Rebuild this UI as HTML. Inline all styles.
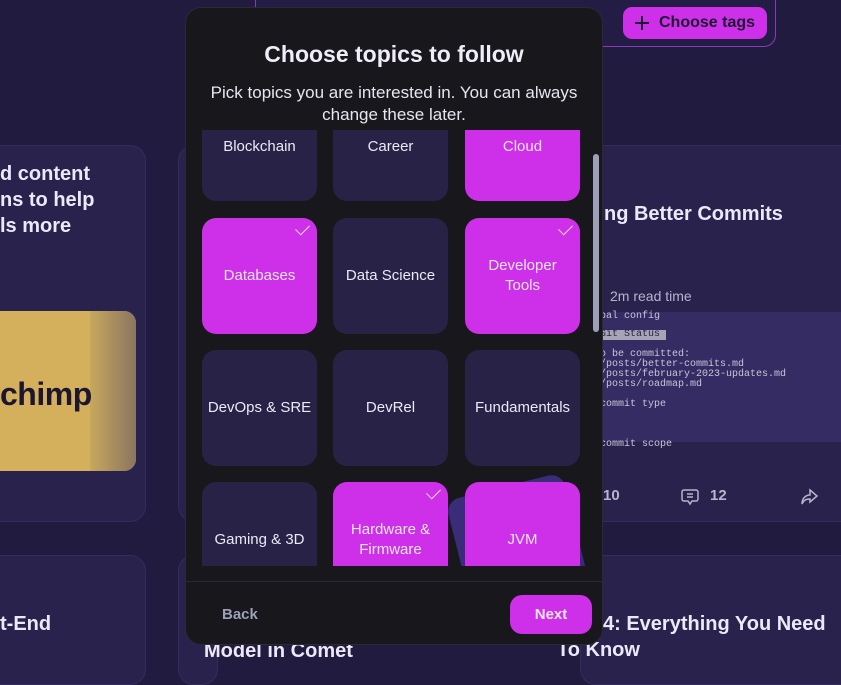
<!DOCTYPE html>
<html><head><meta charset="utf-8"><style>
*{box-sizing:border-box;margin:0;padding:0}
body{width:841px;height:661px;overflow:hidden;background:#221b40;font-family:"Liberation Sans",sans-serif;position:relative;color:#ece8f6}
.card{position:absolute;background:#29224d;border:1px solid #342c5c;border-radius:16px}
.t{position:absolute;font-weight:bold;font-size:20px;line-height:26px;color:#ece8f6;white-space:nowrap}
.modal{position:absolute;left:185px;top:7px;width:418px;height:638px;background:#18181c;border-radius:16px;border:1px solid #2c2838;overflow:hidden}
.tile{position:absolute;width:115px;height:116px;border-radius:14px;background:#282346;display:flex;align-items:center;justify-content:center;text-align:center;font-size:15px;line-height:20px;color:#ece8f6;padding:0 3px}
.on{background:#ce2fe8}
.ck{position:absolute;right:8px;top:6px;width:13px;height:8px;border-left:1.5px solid #e8e0f0;border-bottom:1.5px solid #e8e0f0;transform:rotate(-45deg)}
.mono{font-family:"Liberation Mono",monospace;font-size:10px;line-height:10px;color:#c8c4d8;position:absolute;left:600px;white-space:pre}
</style></head><body>
<div style="position:absolute;left:255px;top:-20px;width:521px;height:67px;border:1px solid #8a3ab8;border-radius:12px;background:#231c44"></div>
<div style="position:absolute;left:623px;top:7px;width:144px;height:32px;background:#ce2fe8;border-radius:9px;color:#1c1630;font-weight:bold;font-size:16px;line-height:32px;padding-left:36px">Choose tags</div>
<div style="position:absolute;left:635px;top:22px;width:14px;height:2px;background:#1c1630"></div>
<div style="position:absolute;left:641px;top:16px;width:2px;height:14px;background:#1c1630"></div>

<div class="card" style="left:-20px;top:145px;width:166px;height:377px"></div>
<div class="t" style="left:0;top:161px">d content<br>ns to help<br>ls more</div>
<div style="position:absolute;left:0;top:311px;width:136px;height:160px;background:#d4b05c;border-radius:0 12px 12px 0"></div>
<div style="position:absolute;left:90px;top:311px;width:46px;height:160px;background:linear-gradient(90deg,#c8a85c,#8a7560);border-radius:0 12px 12px 0"></div>
<div style="position:absolute;left:0;top:376px;font-weight:900;font-size:32px;color:#1c1630;letter-spacing:-0.5px">chimp</div>
<div class="card" style="left:178px;top:145px;width:40px;height:377px"></div>
<div class="card" style="left:-20px;top:555px;width:166px;height:130px"></div>
<div class="t" style="left:0;top:611px">t-End</div>
<div class="card" style="left:178px;top:555px;width:40px;height:130px"></div>
<div class="t" style="left:204px;top:638px">Model in Comet</div>

<div class="card" style="left:580px;top:145px;width:280px;height:377px"></div>
<div class="t" style="left:604px;top:201px">ng Better Commits</div>
<div style="position:absolute;left:610px;top:288px;font-size:14px;color:#b8b4cc">2m read time</div>
<div style="position:absolute;left:600px;top:312px;width:241px;height:130px;background:#362c64;border-radius:12px 0 0 0"></div>
<div class="mono" style="top:312px">bal config</div>
<div style="position:absolute;left:603px;top:330px;width:63px;height:10px;background:#a8a4b8"></div>
<div class="mono" style="top:330px;color:#2a2440">Git Status</div>
<div class="mono" style="top:350px">o be committed:
/posts/better-commits.md
/posts/february-2023-updates.md
/posts/roadmap.md

commit type



commit scope</div>
<div style="position:absolute;left:603px;top:487px;font-size:15px;font-weight:bold;color:#b8b4cc">10</div>
<svg style="position:absolute;left:680px;top:487px" width="20" height="20" viewBox="0 0 20 20" fill="none" stroke="#b8b4cc" stroke-width="1.5"><path d="M4 3h12a2 2 0 0 1 2 2v7a2 2 0 0 1-2 2h-4l-2 3-2-3H4a2 2 0 0 1-2-2V5a2 2 0 0 1 2-2z M7 7h6 M7 10h6"/></svg>
<div style="position:absolute;left:710px;top:487px;font-size:15px;font-weight:bold;color:#b8b4cc">12</div>
<svg style="position:absolute;left:799px;top:487px" width="20" height="20" viewBox="0 0 20 20" fill="none" stroke="#b8b4cc" stroke-width="1.5"><path d="M11 3l7 6-7 6v-3c-4 0-6 1-8 5 0-5 3-9 8-9z"/></svg>
<div class="card" style="left:580px;top:555px;width:280px;height:130px"></div>
<div class="t" style="left:603px;top:611px">4: Everything You Need</div>
<div class="t" style="left:557px;top:637px">To Know</div>

<div class="modal">
<div style="position:absolute;left:0;width:100%;top:33px;text-align:center;font-weight:bold;font-size:23px;color:#f0ecf8">Choose topics to follow</div>
<div style="position:absolute;left:14px;right:14px;top:74px;text-align:center;font-size:17px;line-height:22px;color:#e8e4f0">Pick topics you are interested in. You can always change these later.</div>
<div style="position:absolute;left:0;top:122px;width:418px;height:436px;overflow:hidden">
<div style="position:absolute;left:0;top:-45px;width:418px;height:600px">
<div class="tile" style="left:16px;top:0;align-items:flex-start;padding-top:52px">Blockchain</div>
<div class="tile" style="left:147px;top:0;align-items:flex-start;padding-top:52px">Career</div>
<div class="tile on" style="left:279px;top:0;align-items:flex-start;padding-top:52px">Cloud</div>
<div class="tile on" style="left:16px;top:133px">Databases<span class="ck"></span></div>
<div class="tile" style="left:147px;top:133px">Data Science</div>
<div class="tile on" style="left:279px;top:133px">Developer<br>Tools<span class="ck"></span></div>
<div class="tile" style="left:16px;top:265px;white-space:nowrap">DevOps &amp; SRE</div>
<div class="tile" style="left:147px;top:265px">DevRel</div>
<div class="tile" style="left:279px;top:265px">Fundamentals</div>
<div class="tile" style="left:16px;top:397px">Gaming &amp; 3D</div>
<div class="tile on" style="left:147px;top:397px">Hardware &amp;<br>Firmware<span class="ck"></span></div>
<div style="position:absolute;left:272px;top:400px;width:120px;height:120px;background:#3a2c78;border-radius:14px;transform:rotate(-14deg)"></div>
<div class="tile on" style="left:279px;top:397px">JVM</div>
</div></div>
<div style="position:absolute;right:3px;top:146px;width:6px;height:178px;background:#9ba0b8;border-radius:3px"></div>
<div style="position:absolute;left:0;top:573px;width:100%;height:1px;background:#2a2838"></div>
<div style="position:absolute;left:36px;top:598px;font-weight:bold;font-size:15px;color:#9ca0b8">Back</div>
<div style="position:absolute;left:324px;top:587px;width:82px;height:39px;background:#ce2fe8;border-radius:12px;text-align:center;line-height:39px;font-weight:bold;font-size:15px;color:#f0e8f8">Next</div>
</div>
</body></html>
